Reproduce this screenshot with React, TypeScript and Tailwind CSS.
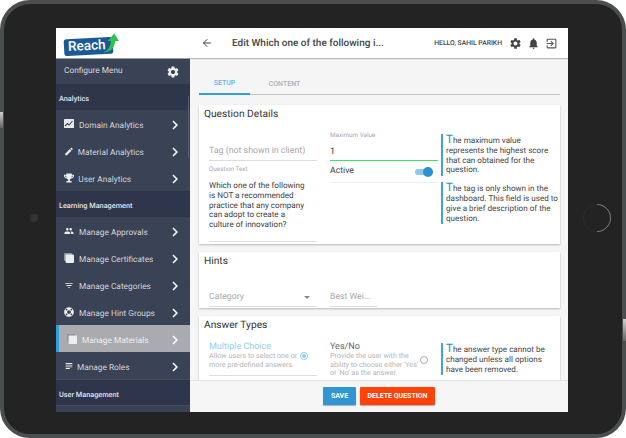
import type { ReactNode } from "react";
import { ArrowLeft } from "lucide-react";
import {
  MdChevronRight,
  MdEdit,
  MdExitToApp,
  MdFilterList,
  MdNotifications,
  MdPeople,
  MdSettings,
  MdSubject,
} from "react-icons/md";
import { FaLifeRing, FaTrophy } from "react-icons/fa";

function ChartIcon() {
  return (
    <svg viewBox="0 0 10 10" className="h-[10px] w-[10px]">
      <rect width="10" height="9" rx="0.6" fill="#e8e9ec" />
      <path d="M1 7l2.5-2.5L5 6l3.5-4" fill="none" stroke="#3a4255" strokeWidth="1.1" />
    </svg>
  );
}

function PagesIcon() {
  return (
    <svg viewBox="0 0 10 10" className="h-[10px] w-[10px]">
      <rect x="0" y="0" width="8" height="8" rx="1" fill="#8f94a0" />
      <rect x="1.6" y="1.4" width="8.4" height="8.6" rx="1" fill="#eceded" />
    </svg>
  );
}

function Logo() {
  return (
    <div className="relative ml-[8px] h-[22px] w-[55px]">
      <div className="absolute top-[6px] left-0 flex h-[17px] w-[49px] -rotate-3 items-center rounded-[3px] bg-[#1c5a96] pl-[4px]">
        <span className="text-[13.5px] leading-none font-medium text-white">Reach</span>
      </div>
      <svg viewBox="0 0 18 22" className="absolute top-0 left-[38px] h-[22px] w-[17px]">
        <path d="M1 21c5-1 8-6 8.500-12H6l7-8 5 8h-4c-1 8-5 12-13 12z" fill="#2fc24e" />
      </svg>
    </div>
  );
}

function Section({ title, border }: { title: string; border?: boolean }) {
  return (
    <div
      className={`flex h-[26px] shrink-0 items-center bg-[#2f354a] pt-[5px] pl-[3px] text-[7.3px] font-medium text-[#e4e6ea] ${
        border ? "border-b border-[#454c60]" : ""
      }`}
    >
      {title}
    </div>
  );
}

function NavItem({ icon, label, gap, active }: { icon: ReactNode; label: string; gap: number; active?: boolean }) {
  return (
    <div
      className={`flex h-[27px] shrink-0 items-center pt-[3px] pl-[8px] ${
        active ? "border-l-[3px] border-[#2f9fdc] bg-[#a9abae] text-[#eeeeee]" : "text-[#d3d5da]"
      }`}
    >
      <span className="flex w-[10px] -translate-y-[1px] justify-center text-[#eceded]">{icon}</span>
      <span className="translate-y-[1px] text-[8.3px] whitespace-nowrap" style={{ marginLeft: gap }}>
        {label}
      </span>
      <MdChevronRight className="mr-[6px] ml-auto h-[18px] w-[18px] text-white" />
    </div>
  );
}

function Note({ lead, rest, className }: { lead: string; rest: string; className?: string }) {
  return (
    <p className={`border-l-2 border-[#3da4dd] py-[1px] pl-[3px] text-[8.1px] leading-[9.8px] text-[#444444] ${className ?? ""}`}>
      <span className="text-[11.5px] leading-[9.8px] text-[#2b8ccb]">{lead}</span>
      {rest}
    </p>
  );
}

function Card({ title, className, children }: { title: string; className?: string; children: ReactNode }) {
  return (
    <section className={`mr-[8px] ml-[9px] shrink-0 bg-white px-[5px] pt-[2px] shadow-[0_1px_2px_rgba(0,0,0,0.25)] ${className ?? ""}`}>
      <h2 className="text-[10.2px] leading-[16px] text-[#333333]">{title}</h2>
      {children}
    </section>
  );
}

export default function App() {
  return (
    <div className="relative h-[438px] w-[626px] overflow-hidden bg-white font-['Roboto',sans-serif] [text-rendering:geometricPrecision]">
      {/* side buttons of the tablet */}
      <div className="absolute top-[112px] left-0 z-10 h-[16px] w-[3px] bg-gradient-to-b from-[#d0d0d0] to-[#666666]" />
      <div className="absolute top-[319px] right-0 z-10 h-[22px] w-[3px] bg-gradient-to-b from-[#d0d0d0] to-[#666666]" />

      <div className="flex h-[438px] w-[626px] rounded-[30px] border-[4px] border-[#4a4e4e] bg-[#232323] pt-[24px] pr-[54px] pb-[22px] pl-[52px]">
        <div className="flex min-w-0 flex-1 overflow-hidden bg-[#f5f5f5]">
          {/* sidebar */}
          <aside className="relative flex w-[134px] shrink-0 flex-col overflow-hidden bg-[#3a4255]">
            <div className="flex h-[31px] shrink-0 items-center border-b border-[#9a9ca3] bg-white">
              <Logo />
            </div>
            <div className="flex h-[25px] shrink-0 items-center justify-between pr-[10px] pl-[8px] text-[8.3px] text-[#d8dade]">
              <span>Configure Menu</span>
              <MdSettings className="h-[14px] w-[14px] text-[#eceded]" />
            </div>
            <Section title="Analytics" />
            <NavItem icon={<ChartIcon />} label="Domain Analytics" gap={5} />
            <NavItem icon={<MdEdit className="h-[11px] w-[11px]" />} label="Material Analytics" gap={3.7} />
            <NavItem icon={<FaTrophy className="h-[10px] w-[10px]" />} label="User Analytics" gap={4.3} />
            <Section title="Learning Management" />
            <NavItem icon={<MdPeople className="h-[12px] w-[12px]" />} label="Manage Approvals" gap={5} />
            <NavItem icon={<PagesIcon />} label="Manage Certificates" gap={5} />
            <NavItem icon={<MdFilterList className="h-[13px] w-[13px]" />} label="Manage Categories" gap={5} />
            <NavItem icon={<FaLifeRing className="h-[10px] w-[10px]" />} label="Manage Hint Groups" gap={5} />
            <NavItem icon={<PagesIcon />} label="Manage Materials" gap={5} active />
            <NavItem icon={<MdSubject className="h-[12px] w-[12px]" />} label="Manage Roles" gap={3} />
            <div className="h-px shrink-0 bg-[#454c60]" />
            <Section title="User Management" border />
            <div className="absolute top-[68px] right-[1px] h-[62px] w-[1px] bg-[#596073]" />
          </aside>

          {/* main */}
          <main className="flex min-w-0 flex-1 flex-col">
            <header className="flex h-[30px] shrink-0 items-center bg-white pr-[10px] pl-[11px] shadow-[0_1px_1px_rgba(0,0,0,0.25)]">
              <ArrowLeft className="h-[12px] w-[12px] text-[#444444]" strokeWidth={2} />
              <h1 className="ml-[19px] text-[10px] font-medium text-[#444444]">Edit Which one of the following i...</h1>
              <span className="ml-auto text-[6.8px] font-medium text-[#444444]">HELLO, SAHIL PARIKH</span>
              <MdSettings className="ml-[7px] h-[13px] w-[13px] text-[#444444]" />
              <MdNotifications className="ml-[5px] h-[13px] w-[13px] text-[#444444]" />
              <MdExitToApp className="ml-[5px] h-[13px] w-[13px] text-[#555555]" />
            </header>

            <div className="min-h-0 flex-1 overflow-hidden">
              <div className="mt-[16px] mr-[8px] ml-[9px] flex h-[21px] border-b border-[#c4c4c4] text-[7px] font-medium">
                <div className="flex h-[21px] w-[51px] items-center justify-center border-b-2 border-[#2f9fdc] pb-[1px] text-[#62b5e4]">
                  SETUP
                </div>
                <div className="ml-[10px] flex h-[20px] w-[46px] items-center justify-center pl-[3px] text-[#b0b0b0]">CONTENT</div>
              </div>

              <Card title="Question Details" className="mt-[10px] h-[139px]">
                <div className="mt-[8px] grid grid-cols-[108px_108px_1fr] pl-[5px]">
                  <div className="pt-[13px]">
                    <div className="border-b border-[#dddddd] pb-[2px] text-[8.8px] leading-[14px] text-[#a8a8a8]">
                      Tag (not shown in client)
                    </div>
                    <div className="mt-[4px] text-[6.3px] leading-[8px] text-[#a8a8a8]">Question Text</div>
                    <p className="mt-[8px] h-[61px] border-b border-[#dddddd] pr-[8px] text-[8.1px] leading-[9.8px] text-[#3c3c3c]">
                      Which one of the following is NOT a recommended practice that any company can adopt to create a culture of innovation?
                    </p>
                  </div>
                  <div className="ml-[13px] w-[108px]">
                    <div className="text-[6.300px] leading-[8px] text-[#a8a8a8]">Maximum Value</div>
                    <div className="mt-[7px] border-b-[1.5px] border-[#3ee06e] pb-[2px] text-[9px] leading-[12px] text-[#333333]">1</div>
                    <div className="flex h-[22px] items-center justify-between border-b border-[#eeeeee] text-[8.700px] text-[#444444]">
                      <span>Active</span>
                      <span className="relative mr-[8px] h-[6px] w-[15px] rounded-full bg-[#90c8ea]">
                        <span className="absolute top-[-2px] right-[-3px] h-[10px] w-[10px] rounded-full bg-[#2b8fd3]" />
                      </span>
                    </div>
                  </div>
                  <div className="ml-[16px] w-[118px] pt-[3px]">
                    <Note lead="T" rest="he maximum value represents the highest score that can obtained for the question." />
                    <Note lead="T" rest="he tag is only shown in the dashboard. This field is used to give a brief description of the question." className="mt-[6px]" />
                  </div>
                </div>
              </Card>

              <Card title="Hints" className="mt-[8px] h-[56px]">
                <div className="mt-[20px] flex pl-[5px] text-[8.700px] text-[#a8a8a8]">
                  <div className="flex h-[17px] w-[108px] items-center justify-between border-b border-[#dddddd] pr-[7px]">
                    <span>Category</span>
                    <span className="h-0 w-0 -translate-y-[1px] border-x-[3.5px] border-t-[3.5px] border-x-transparent border-t-[#888888]" />
                  </div>
                  <div className="ml-[13px] flex h-[17px] w-[47px] items-center border-b border-[#dddddd]">Best Wei...</div>
                </div>
              </Card>

              <Card title="Answer Types" className="mt-[8px] h-[80px]">
                <div className="mt-[8px] grid grid-cols-[108px_108px_1fr] pl-[5px]">
                  <div className="relative h-[34px] border-b border-[#dddddd]">
                    <div className="text-[9px] leading-[10px] text-[#92cdf0]">Multiple Choice</div>
                    <div className="w-[92px] text-[7.200px] leading-[8.500px] text-[#b4b4b4]">Allow users to select one or more pre-defined answers.</div>
                    <span className="absolute top-[10px] right-[9px] flex h-[8px] w-[8px] items-center justify-center rounded-full border border-[#92cdf0]">
                      <span className="h-[4px] w-[4px] rounded-full bg-[#92cdf0]" />
                    </span>
                  </div>
                  <div className="relative ml-[13px] w-[108px]">
                    <div className="text-[9px] leading-[10px] text-[#666666]">Yes/No</div>
                    <div className="w-[92px] text-[7.200px] leading-[8.500px] text-[#b4b4b4]">Provide the user with the ability to choose either 'Yes' or 'No' as the answer.</div>
                    <span className="absolute top-[14px] right-[10px] h-[8px] w-[8px] rounded-full border border-[#aaaaaa]" />
                  </div>
                  <div className="ml-[16px] w-[114px] pt-[1px]">
                    <Note lead="T" rest="he answer type cannot be changed unless all options have been removed." />
                  </div>
                </div>
              </Card>
            </div>

            <footer className="z-10 flex h-[32px] shrink-0 items-center justify-center gap-[4px] border-t border-[#e4e4e4] bg-[#f6f6f6] pb-[1px] text-[7px] font-bold text-white">
              <button className="h-[18px] w-[33px] rounded-[1px] bg-[#2f96d3] shadow-[0_1px_1px_rgba(0,0,0,0.3)]">SAVE</button>
              <button className="h-[18px] w-[75px] rounded-[1px] bg-[#ff4208] shadow-[0_1px_1px_rgba(0,0,0,0.3)]">DELETE QUESTION</button>
            </footer>
          </main>
        </div>
      </div>

      {/* camera and home button sit on the bezel */}
      <span className="absolute top-[214px] left-[30px] flex h-[8px] w-[8px] items-center justify-center rounded-full bg-[#333333]">
        <span className="h-[3px] w-[3px] rounded-full bg-[#3a3350]" />
      </span>
      <span className="absolute top-[204px] left-[583px] h-[28px] w-[28px] -rotate-45 rounded-full border border-[#2c2c2c] border-r-[#777777] border-b-[#777777]" />
    </div>
  );
}
